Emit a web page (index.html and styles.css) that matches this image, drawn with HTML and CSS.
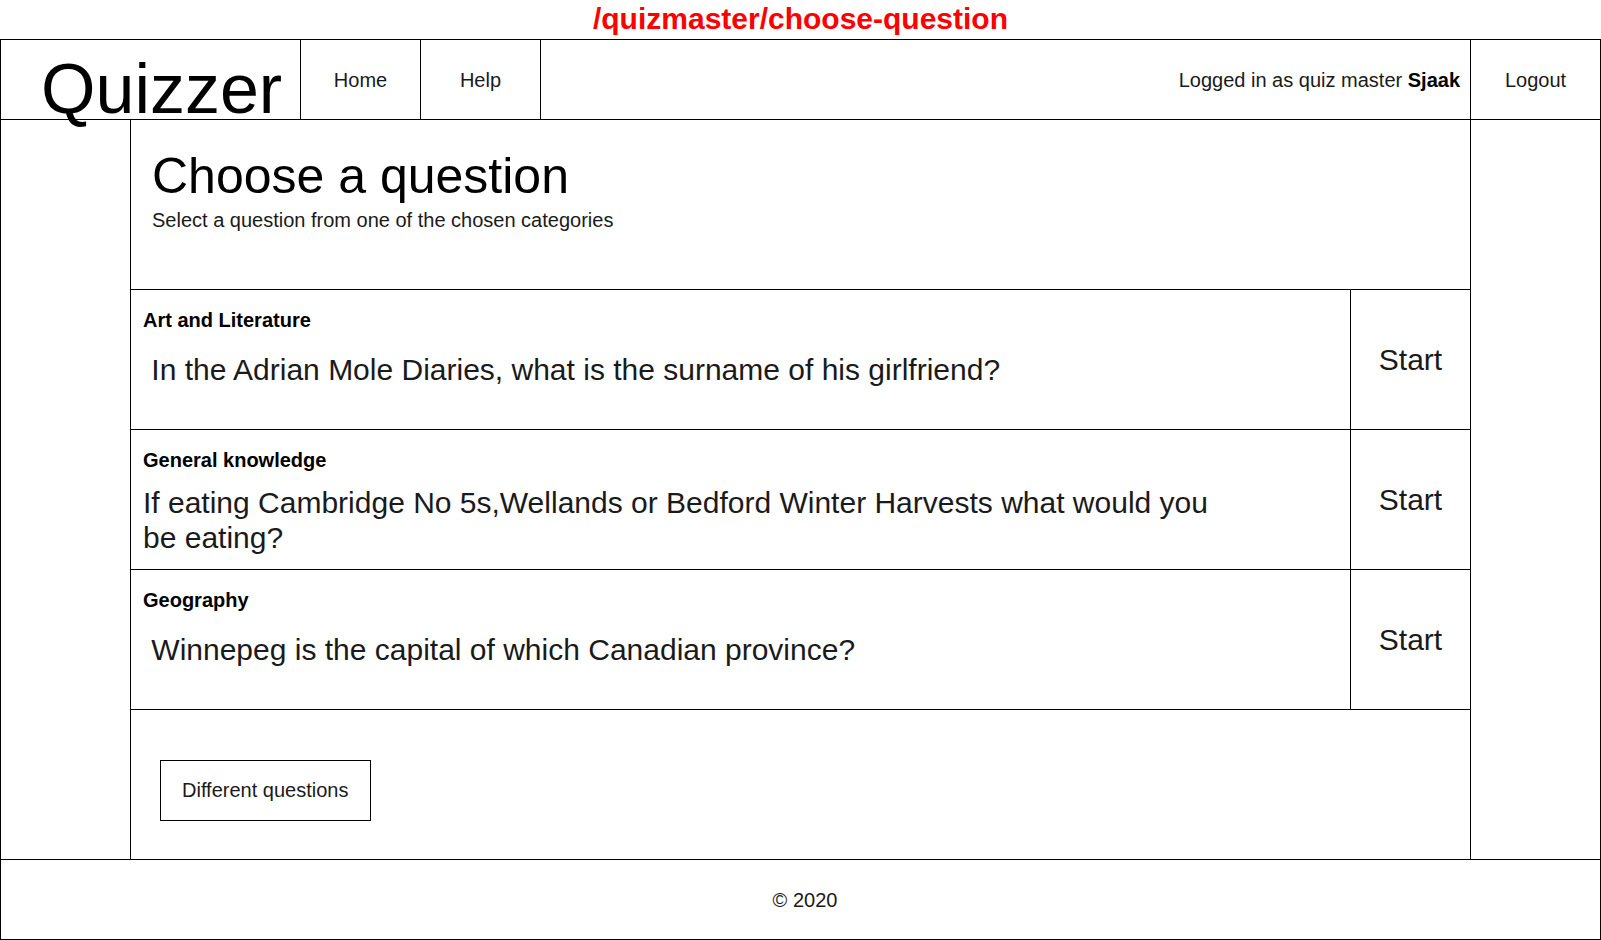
FILE: index.html
```html
<!DOCTYPE html>
<html lang="en">
<head>
<meta charset="utf-8">
<title>Quizzer - Choose a question</title>
<link rel="stylesheet" href="styles.css">
</head>
<body>
<div class="route">/quizmaster/choose-question</div>
<div class="frame">
  <header class="header">
    <div class="brand">Quizzer</div>
    <a class="nav-item" href="#">Home</a>
    <a class="nav-item" href="#">Help</a>
    <div class="user">Logged in as quiz master <b>Sjaak</b></div>
    <a class="nav-item logout" href="#">Logout</a>
  </header>
  <div class="content">
    <div class="side side-left"></div>
    <main class="main">
      <section class="intro">
        <h1 class="intro-title">Choose a question</h1>
        <p class="intro-sub">Select a question from one of the chosen categories</p>
      </section>
      <div class="q-row">
        <div class="q-body">
          <div class="q-cat">Art and Literature</div>
          <div class="q-text q-text-single">&nbsp;In the Adrian Mole Diaries, what is the surname of his girlfriend?</div>
        </div>
        <a class="q-start" href="#">Start</a>
      </div>
      <div class="q-row">
        <div class="q-body">
          <div class="q-cat">General knowledge</div>
          <div class="q-text">If eating Cambridge No 5s,Wellands or Bedford Winter Harvests what would you be eating?</div>
        </div>
        <a class="q-start" href="#">Start</a>
      </div>
      <div class="q-row">
        <div class="q-body">
          <div class="q-cat">Geography</div>
          <div class="q-text q-text-single">&nbsp;Winnepeg is the capital of which Canadian province?</div>
        </div>
        <a class="q-start" href="#">Start</a>
      </div>
      <div class="actions">
        <button class="btn" type="button">Different questions</button>
      </div>
    </main>
    <div class="side side-right"></div>
  </div>
  <footer class="footer">© 2020</footer>
</div>
</body>
</html>
```

FILE: styles.css
```css
* {
  box-sizing: border-box;
}

html, body {
  margin: 0;
  padding: 0;
  background: #fff;
}

body {
  font-family: "Liberation Sans", Arial, sans-serif;
  font-size: 20px;
  color: #1a1a1a;
  width: 1601px;
}

a {
  color: inherit;
  text-decoration: none;
}

.route {
  height: 39px;
  line-height: 38px;
  text-align: center;
  color: #ff0000;
  font-weight: bold;
  font-size: 30px;
}

.frame {
  border: 1px solid #000;
}

/* Header */
.header {
  display: flex;
  height: 80px;
  border-bottom: 1px solid #000;
}

.brand {
  width: 300px;
  flex: none;
  border-right: 1px solid #000;
  font-size: 70px;
  line-height: 70px;
  padding: 14px 0 0 40px;
  color: #000;
  white-space: nowrap;
}

.nav-item {
  width: 120px;
  flex: none;
  border-right: 1px solid #000;
  display: flex;
  align-items: center;
  justify-content: center;
  line-height: 23px;
  padding-top: 2px;
}

.user {
  flex: 1;
  display: flex;
  align-items: center;
  justify-content: flex-end;
  padding: 2px 10px 0 0;
  line-height: 23px;
  white-space: pre;
}

.user b {
  color: #000;
}

.logout {
  width: 130px;
  border-right: none;
  border-left: 1px solid #000;
}

/* Content */
.content {
  display: grid;
  grid-template-columns: 130px 1fr 129px;
  border-bottom: 1px solid #000;
}

.side-left {
  border-right: 1px solid #000;
}

.main {
  border-right: 1px solid #000;
  display: flex;
  flex-direction: column;
}

.intro {
  height: 170px;
  border-bottom: 1px solid #000;
  padding: 27px 20px 0 21px;
}

.intro-title {
  margin: 0;
  font-size: 50px;
  line-height: 58px;
  font-weight: normal;
  color: #000;
}

.intro-sub {
  margin: 4px 0 0 0;
  font-size: 20px;
  line-height: 23px;
}

.q-row {
  display: grid;
  grid-template-columns: 1fr 120px;
  height: 140px;
  border-bottom: 1px solid #000;
}

.q-body {
  padding: 19px 110px 0 12px;
}

.q-cat {
  font-weight: bold;
  font-size: 20px;
  line-height: 23px;
  color: #000;
}

.q-text {
  margin-top: 13px;
  font-size: 30px;
  line-height: 35px;
}

.q-text-single {
  margin-top: 20px;
}

.q-start {
  border-left: 1px solid #000;
  display: flex;
  align-items: center;
  justify-content: center;
  font-size: 30px;
  line-height: 35px;
}

.actions {
  height: 149px;
  padding: 50px 0 0 29px;
}

.btn {
  font-family: inherit;
  font-size: 20px;
  line-height: 23px;
  color: #1a1a1a;
  background: #fff;
  border: 1px solid #000;
  border-radius: 0;
  height: 61px;
  padding: 0 22px 0 21px;
  cursor: pointer;
}

/* Footer */
.footer {
  height: 79px;
  display: flex;
  align-items: center;
  justify-content: center;
  padding: 2px 0 0 9px;
  line-height: 23px;
}
```
